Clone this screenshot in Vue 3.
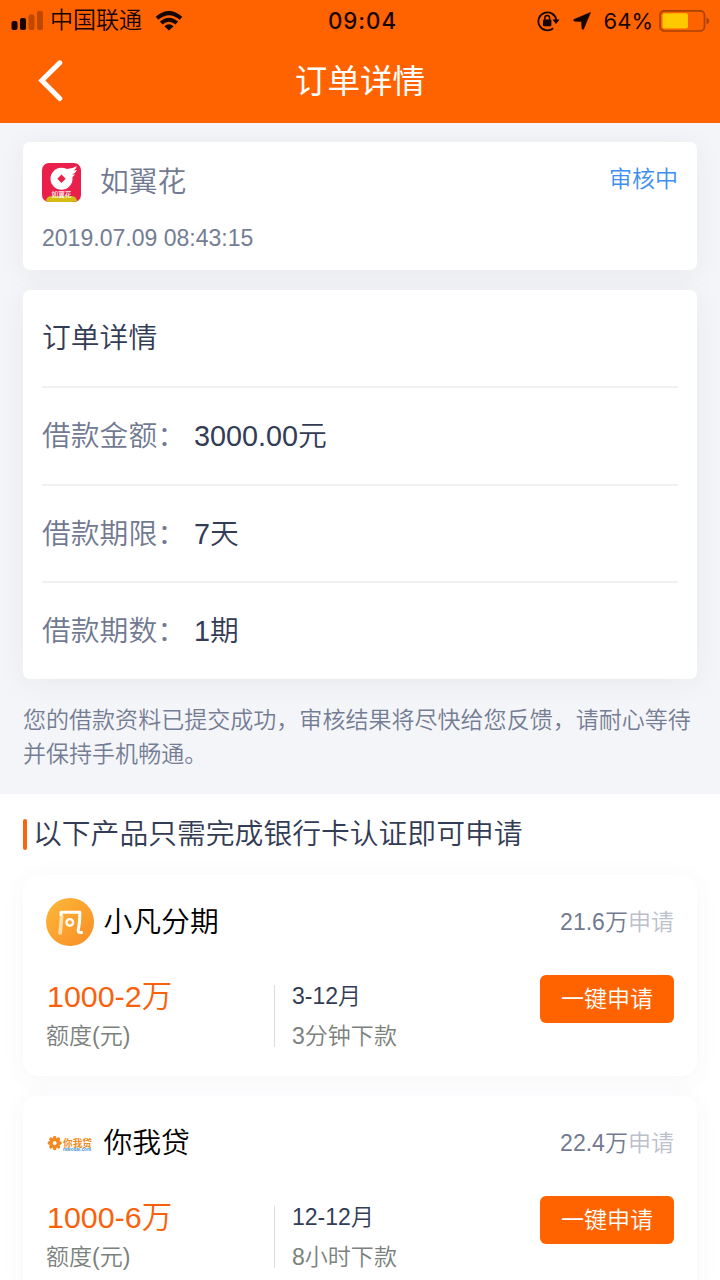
<script setup>
const details = [
  { label: '借款金额：', value: '3000.00元' },
  { label: '借款期限：', value: '7天' },
  { label: '借款期数：', value: '1期' },
]
const products = [
  { id: 'xiaofan', name: '小凡分期', count: '21.6万', amount: '1000-2万', term: '3-12月', speed: '3分钟下款' },
  { id: 'niwodai', name: '你我贷', count: '22.4万', amount: '1000-6万', term: '12-12月', speed: '8小时下款' },
]
const petals = [0, 45, 90, 135, 180, 225, 270, 315]
</script>

<template>
  <div class="screen">
    <header class="header">
      <div class="status">
        <div class="status-left">
          <svg class="signal" width="33" height="20" viewBox="0 0 33 20">
            <rect x="0.500" y="10" width="6" height="9" rx="2" />
            <rect x="9" y="7" width="6" height="12" rx="2" />
            <rect x="17.500" y="3.500" width="6" height="15.500" rx="2" opacity=".28" />
            <rect x="26" y="0" width="6" height="19" rx="2" opacity=".28" />
          </svg>
          <span class="carrier">中国联通</span>
          <svg class="wifi" width="28" height="20" viewBox="0 0 28 20" fill="none" stroke="#160500" stroke-width="4">
            <path d="M2 7.200Q14 -3 26 7.200" />
            <path d="M6.200 12Q14 5.400 21.800 12" />
            <path d="M9.400 15.300Q14 11.200 18.600 15.300L14 19.500Z" fill="#160500" stroke="none" />
          </svg>
        </div>
        <div class="time">09:04</div>
        <div class="status-right">
          <svg width="24" height="22" viewBox="0 0 24 22">
            <path d="M16.200 18.200A9 9 0 1 1 19.300 10" fill="none" stroke="#160500" stroke-width="1.800" />
            <path d="M15.400 9.500h7.200l-3.600 4.400z" />
            <rect x="6" y="9.500" width="8.400" height="6.800" rx="1" />
            <path d="M7.800 10V7.800a2.400 2.400 0 0 1 4.800 0V10" fill="none" stroke="#160500" stroke-width="1.500" />
          </svg>
          <svg class="arrow" width="18" height="18" viewBox="0 0 18 18">
            <path d="M17.500 .5L.8 7.600Q.2 9 1.800 9.200L8.600 9.400L8.900 16.200Q9.200 17.800 10.500 17.200Z" stroke="#160500" stroke-width=".6" />
          </svg>
          <span class="percent">64%</span>
          <svg class="battery" width="51" height="22" viewBox="0 0 51 22">
            <rect x="1" y=".8" width="44.500" height="20.200" rx="4.500" fill="none" stroke="#a84303" stroke-width="1.700" />
            <rect x="3.500" y="3.300" width="25.500" height="15.200" rx="2" fill="#ffc900" />
            <path d="M47.500 7.500Q50.300 9 50.300 11T47.500 14.500Z" fill="#a84303" />
          </svg>
        </div>
      </div>
      <div class="nav">
        <svg class="back" width="28" height="44" viewBox="0 0 28 44">
          <path d="M22.300 4.800L4.300 22.500L22.300 40.500" transform="translate(0.500 0)" fill="none" stroke="#fff" stroke-width="5" stroke-linecap="round" />
        </svg>
        <h1 class="nav-title">订单详情</h1>
      </div>
    </header>

    <main class="order">
      <section class="card summary">
        <div class="summary-top">
          <svg class="brand" width="39" height="39" viewBox="0 0 39 39">
            <rect width="39" height="39" rx="7" fill="#e91f4c" />
            <circle cx="19.500" cy="15.800" r="11" fill="#fff" />
            <path d="M18 5Q28 7.500 35 3Q34 6 31.500 7.500L35 7Q33.500 10.500 30 11.400L33 11.600Q31 14.600 28 14.500Z" fill="#fff" />
            <path d="M19.500 11.600L23.700 15.800L19.500 20L15.300 15.800Z" fill="#e91f4c" />
            <path d="M4 38Q4.500 33 10 33H29Q34.500 33 35 38Q33 39 30 39H8Q6 39 4 38Z" fill="#d4bc12" />
            <text x="19.500" y="33.700" text-anchor="middle" font-size="6.700" font-weight="500" fill="#fff">如翼花</text>
          </svg>
          <span class="brand-name">如翼花</span>
          <span class="state">审核中</span>
        </div>
        <div class="date">2019.07.09 08:43:15</div>
      </section>

      <section class="card details">
        <div class="row heading">订单详情</div>
        <div v-for="d in details" :key="d.label" class="row">
          <span class="label">{{ d.label }}</span>
          <span class="value">{{ d.value }}</span>
        </div>
      </section>

      <p class="notice">您的借款资料已提交成功，审核结果将尽快给您反馈，请耐心等待并保持手机畅通。</p>
    </main>

    <section class="offers">
      <h2 class="offers-title"><i class="bar"></i>以下产品只需完成银行卡认证即可申请</h2>
      <article v-for="p in products" :key="p.id" class="card product">
        <div class="product-top">
          <svg v-if="p.id === 'xiaofan'" width="48" height="48" viewBox="0 0 48 48">
            <defs>
              <linearGradient id="gold" x1="0" y1="0" x2="1" y2="1">
                <stop offset="0" stop-color="#fdb938" />
                <stop offset="1" stop-color="#f98c26" />
              </linearGradient>
            </defs>
            <circle cx="24" cy="24" r="24" fill="url(#gold)" />
            <path d="M15.800 17.500L14 36.500" fill="none" stroke="#ffdda9" stroke-width="3.600" />
            <path d="M15 18V14.200H33.800Q33.800 26 32.200 31.500Q31.800 34.600 34 34.600H36.800" fill="none" stroke="#fff" stroke-width="3" stroke-linejoin="round" />
            <circle cx="23.800" cy="24.400" r="3.300" fill="none" stroke="#fff" stroke-width="2.400" />
          </svg>
          <svg v-else width="48" height="48" viewBox="0 0 48 48">
            <g fill="#f28a22">
              <ellipse v-for="a in petals" :key="a" cx="8.700" cy="19.500" rx="1.900" ry="2.700" :transform="`rotate(${a} 8.700 24)`" />
            </g>
            <circle cx="8.700" cy="24" r="3" fill="none" stroke="#f28a22" stroke-width="1.500" />
            <text x="17" y="27.600" font-size="9.800" class="mini-name" textLength="29" lengthAdjust="spacingAndGlyphs">你我贷</text>
            <text x="17" y="32" font-size="5" class="mini-url" textLength="28" lengthAdjust="spacingAndGlyphs">niwodai.com</text>
          </svg>
          <span class="product-name">{{ p.name }}</span>
          <span class="count">{{ p.count }}<span class="count-unit">申请</span></span>
        </div>
        <div class="product-body">
          <div class="quota">
            <div class="amount">{{ p.amount }}</div>
            <div class="muted">额度(元)</div>
          </div>
          <div class="terms">
            <div class="term">{{ p.term }}</div>
            <div class="muted">{{ p.speed }}</div>
          </div>
          <button class="apply">一键申请</button>
        </div>
      </article>
    </section>
  </div>
</template>

<style>
body {
  margin: 0;
  overflow: hidden;
}
</style>

<style scoped>
.screen {
  width: 720px;
  height: 1280px;
  overflow: hidden;
  background: #fff;
  font-family: "Liberation Sans", "Noto Sans CJK SC", sans-serif;
  font-weight: 350;
  font-size: 23.04px;
  color: #333c55;
}
.header {
  height: 123px;
  background: #ff6300;
}
.status {
  height: 40px;
  display: grid;
  grid-template-columns: 1fr auto 1fr;
  align-items: center;
  box-sizing: border-box;
  padding: 0 11px;
  color: #160500;
  fill: #160500;
}
.status-left,
.status-right {
  display: flex;
  align-items: center;
}
.status-right {
  justify-content: flex-end;
}
.carrier {
  margin-left: 6px;
  line-height: 41px;
}
.wifi {
  margin-left: 13px;
}
.time {
  font-family: Inter, sans-serif;
  font-weight: 500;
  font-size: 22.3px;
  letter-spacing: 1px;
  line-height: 40px;
  padding-left: 5px;
}
.arrow {
  margin-left: 12px;
}
.percent {
  margin-left: 13px;
  font-family: Inter, sans-serif;
  font-weight: 400;
  font-size: 22px;
  letter-spacing: 0;
}
.battery {
  margin: 0 -1px 0 6px;
}
.nav {
  height: 83px;
  display: grid;
  grid-template-columns: 1fr auto 1fr;
  align-items: center;
}
.back {
  margin: 0 0 4px 37px;
}
.nav-title {
  margin: 0;
  font-size: 32.6px;
  font-weight: 400;
  line-height: 81px;
  color: #fff;
}
.order {
  box-sizing: border-box;
  height: 671px;
  padding: 19px 23px 0;
  background: #f4f5f8;
}
.card {
  background: #fff;
  border-radius: 7px;
  box-shadow: 0 4px 28px rgba(50, 55, 65, .06);
}
.summary {
  box-sizing: border-box;
  height: 128px;
  padding: 20px 19px 0;
}
.summary-top {
  display: flex;
  height: 40px;
}
.brand {
  margin-top: 1px;
}
.brand-name {
  margin-left: 19px;
  font-size: 28.8px;
  line-height: 41px;
  color: #717a91;
}
.state {
  margin-left: auto;
  line-height: 34px;
  color: #3c8ff0;
}
.date {
  margin-top: 20px;
  line-height: 32px;
  color: #747d94;
}
.details {
  box-sizing: border-box;
  height: 389px;
  margin-top: 20px;
  padding: 0 19px;
}
.row {
  box-sizing: border-box;
  display: flex;
  height: 97.8px;
  font-size: 28.8px;
  line-height: 97px;
  border-bottom: 2px solid #f0f1f3;
}
.row:last-child {
  border-bottom: 0;
}
.label {
  width: 152px;
  color: #717a91;
  white-space: nowrap;
}
.notice {
  margin: 23.5px 0 0;
  width: 676px;
  line-height: 34.5px;
  color: #747d94;
}
.offers {
  padding: 25px 23px 0;
}
.offers-title {
  display: flex;
  align-items: center;
  margin: 0 0 25px;
  height: 31px;
  font-size: 28.8px;
  font-weight: inherit;
  line-height: 33px;
}
.bar {
  width: 4px;
  height: 31px;
  margin-right: 6px;
  border-radius: 2px;
  background: #f96412;
}
.product {
  box-sizing: border-box;
  height: 201px;
  margin-bottom: 20px;
  padding: 23px 23px 0;
  border-radius: 16px;
  box-shadow: 0 4px 24px rgba(70, 80, 130, .05);
}
.product-top {
  display: flex;
  height: 48px;
  line-height: 48px;
}
.product-name {
  margin-left: 9.5px;
  font-size: 28.8px;
  line-height: 49px;
  color: #000;
}
.count {
  margin-left: auto;
  color: #717a91;
}
.count-unit {
  color: #bcc0cc;
}
.mini-name {
  font-weight: 700;
  fill: #f28a22;
}
.mini-url {
  font-weight: 700;
  fill: #3f8fd2;
}
.product-body {
  display: flex;
  align-items: flex-start;
  padding-top: 29px;
}
.quota {
  width: 228px;
}
.amount {
  height: 44px;
  padding-left: 1px;
  font-size: 30.4px;
  line-height: 43px;
  color: #f9610c;
}
.muted {
  line-height: 35px;
  color: #7b817c;
}
.terms {
  box-sizing: border-box;
  height: 62px;
  margin-top: 10px;
  padding-left: 17px;
  border-left: 1.500px solid #dcdce8;
}
.term {
  height: 34px;
  margin-top: -6px;
  margin-bottom: 6px;
  line-height: 34px;
}
.apply {
  width: 134px;
  height: 48px;
  margin: 0 0 0 auto;
  padding: 0;
  border: 0;
  border-radius: 6px;
  background: #ff6300;
  color: #fff;
  font: inherit;
  line-height: 49px;
}
</style>
